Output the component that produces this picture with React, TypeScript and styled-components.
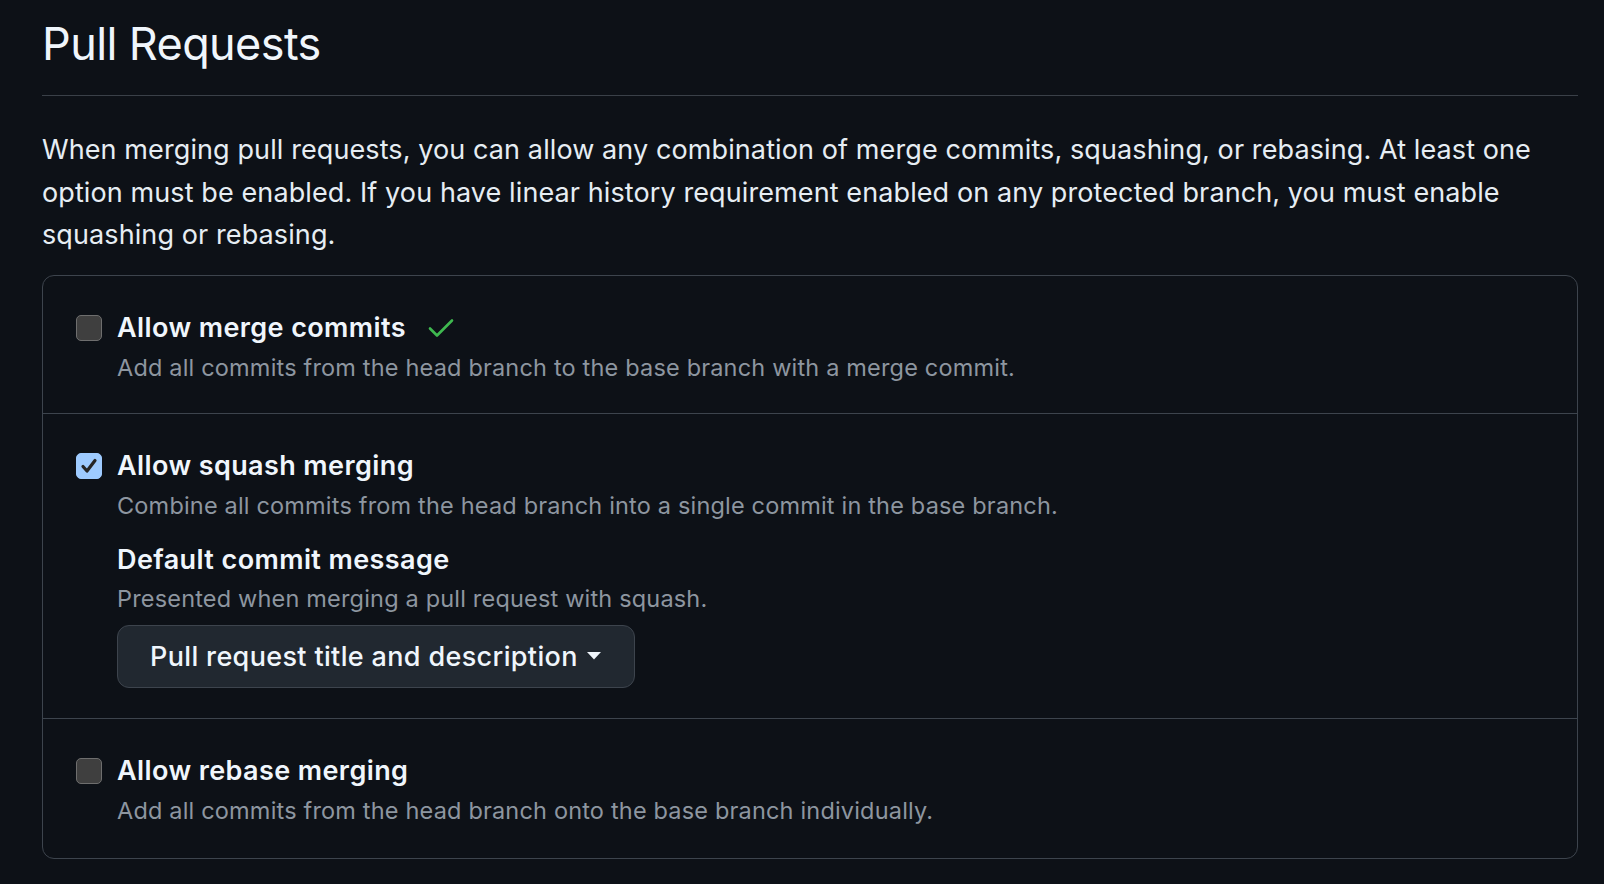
import React from "react";
import styled, { createGlobalStyle } from "styled-components";

const Global = createGlobalStyle`
  html, body { margin: 0; padding: 0; background: #0d1117; }
  body { font-family: Inter, "Noto Sans", sans-serif; color: #e6edf3; }
`;

const Page = styled.div`
  padding: 16px 26px 0 42px;
  background: #0d1117;
  min-height: 884px;
  box-sizing: border-box;
`;

const Heading = styled.h2`
  margin: 0;
  font-size: 45px;
  line-height: 56px;
  font-weight: 400;
  letter-spacing: -0.6px;
  color: #f0f6fc;
  padding-bottom: 23px;
  border-bottom: 1.5px solid #3a4048;
`;

const Intro = styled.p`
  margin: 33px 0 18px;
  font-size: 27px;
  line-height: 42.5px;
  letter-spacing: 0.1px;
  color: #e6edf3;
`;

const Panel = styled.div`
  border: 1px solid #3d444d;
  border-radius: 12px;
`;

const Row = styled.div<{ $bottom: number }>`
  display: flex;
  align-items: flex-start;
  padding: 32px 0 ${(p) => p.$bottom}px 33px;
  & + & { border-top: 1px solid #3d444d; }
`;

const CheckBox = styled.span<{ $checked?: boolean }>`
  flex: none;
  width: 26px;
  height: 26px;
  box-sizing: border-box;
  margin-top: 7px;
  margin-right: 15px;
  border-radius: 5px;
  display: flex;
  align-items: center;
  justify-content: center;
  background: ${(p) => (p.$checked ? "#9ecbff" : "#3f3f3f")};
  border: 1.5px solid ${(p) => (p.$checked ? "#9ecbff" : "#6e6e6e")};
`;

const Body = styled.div`
  display: flex;
  flex-direction: column;
`;

const Title = styled.div`
  display: flex;
  align-items: center;
  font-size: 27px;
  line-height: 40px;
  font-weight: 600;
  letter-spacing: 0.4px;
  color: #f0f6fc;
`;

const Note = styled.div`
  font-size: 23.5px;
  line-height: 36px;
  letter-spacing: 0.18px;
  color: #8d96a0;
  margin-top: 2px;
`;

const SubTitle = styled(Title)`
  margin-top: 16px;
`;

const SubNote = styled(Note)`
  margin-top: 1px;
`;

const Select = styled.button`
  margin-top: 8px;
  align-self: flex-start;
  display: flex;
  align-items: center;
  gap: 9px;
  height: 63px;
  box-sizing: border-box;
  padding: 0 33px 0 32px;
  background: #212830;
  border: 1.5px solid #3d444d;
  border-radius: 12px;
  color: #f0f6fc;
  font-family: Inter, "Noto Sans", sans-serif;
  font-size: 27px;
  font-weight: 500;
  letter-spacing: 0.35px;
`;

const Tick = () => (
  <svg width="26" height="20" viewBox="0 0 26 20" style={{ marginLeft: 22 }}>
    <path d="M2 10.5 L9 17.5 L24 2.5" fill="none" stroke="#3fb950" strokeWidth="2.6" strokeLinecap="round" strokeLinejoin="round" />
  </svg>
);

const CheckMark = () => (
  <svg width="18" height="18" viewBox="0 0 18 18">
    <path d="M3 9.5 L7 14 L15 3.5" fill="none" stroke="#262626" strokeWidth="3.2" strokeLinecap="round" strokeLinejoin="round" />
  </svg>
);

const Caret = () => (
  <svg width="14" height="8" viewBox="0 0 14 8">
    <path d="M0 0 H14 L7 7.5 Z" fill="#f0f6fc" />
  </svg>
);

export default function App() {
  return (
    <Page>
      <Global />
      <Heading>Pull Requests</Heading>
      <Intro>
        When merging pull requests, you can allow any combination of merge commits, squashing, or rebasing. At least one
        option must be enabled. If you have linear history requirement enabled on any protected branch, you must enable
        squashing or rebasing.
      </Intro>
      <Panel>
        <Row $bottom={27}>
          <CheckBox />
          <Body>
            <Title>
              Allow merge commits
              <Tick />
            </Title>
            <Note>Add all commits from the head branch to the base branch with a merge commit.</Note>
          </Body>
        </Row>
        <Row $bottom={30}>
          <CheckBox $checked>
            <CheckMark />
          </CheckBox>
          <Body>
            <Title>Allow squash merging</Title>
            <Note>Combine all commits from the head branch into a single commit in the base branch.</Note>
            <SubTitle>Default commit message</SubTitle>
            <SubNote>Presented when merging a pull request with squash.</SubNote>
            <Select>
              Pull request title and description
              <Caret />
            </Select>
          </Body>
        </Row>
        <Row $bottom={29}>
          <CheckBox />
          <Body>
            <Title>Allow rebase merging</Title>
            <Note>Add all commits from the head branch onto the base branch individually.</Note>
          </Body>
        </Row>
      </Panel>
    </Page>
  );
}
